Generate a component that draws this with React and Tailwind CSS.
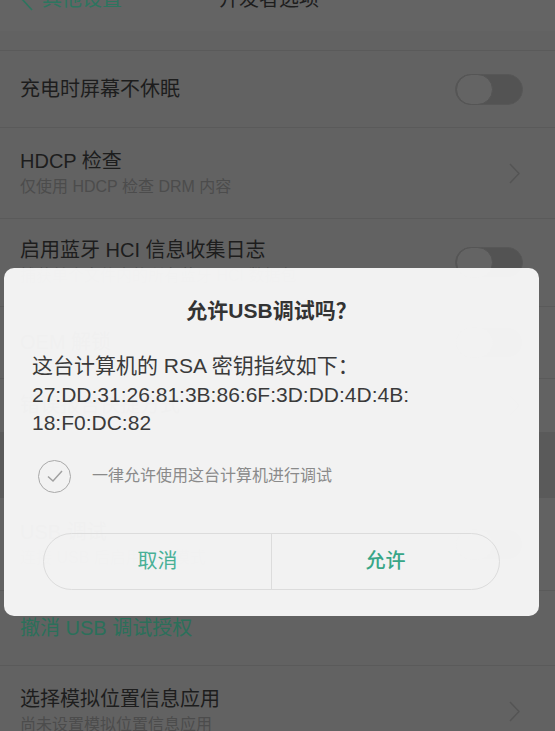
import React from "react";

const font = { fontFamily: '"Liberation Sans", "Noto Sans CJK SC", sans-serif' };

const Toggle = () => (
  <div className="relative w-[68px] h-[31px] rounded-full bg-[#535353] border border-[#575757] shrink-0">
    <div className="absolute left-0 top-[-1px] w-[37px] h-[31px] rounded-full bg-[#646464] border border-[#555555]" />
  </div>
);

const Chevron = () => (
  <svg width="13" height="23" viewBox="0 0 13 23" className="shrink-0 mr-[2px]">
    <polyline points="2,2 11,11.5 2,21" fill="none" stroke="#545454" strokeWidth="1.4" />
  </svg>
);

const Row = ({ title, sub, right, h, green, border = true }) => (
  <div className={"flex items-center justify-between pl-5 pr-[32px] " + h + (border ? " border-t border-[#5a5a5a]" : "")}>
    <div className="flex flex-col">
      <div className={"text-[20px] leading-[27px] " + (green ? "text-[#2b705a]" : "text-[#1d1d1d]")}>{title}</div>
      {sub && <div className="text-[16px] leading-[24px] text-[#4c4c4c]">{sub}</div>}
    </div>
    {right === "toggle" && <Toggle />}
    {right === "chevron" && <Chevron />}
  </div>
);

export default function App() {
  const [always, setAlways] = React.useState(true);
  return (
    <div style={font} className="relative w-full h-[731px] overflow-hidden bg-[#626262]">
      <div className="h-[31px] bg-[#646464] overflow-hidden">
        <div className="relative h-[20px] -mt-[11px] flex items-center">
          <div className="flex items-center pl-5 text-[#2d755f] text-[20px]">
            <svg width="14" height="24" viewBox="0 0 14 24" className="mr-2">
              <polyline points="12,1 2,12 12,23" fill="none" stroke="#2d755f" strokeWidth="1.6" />
            </svg>
            其他设置
          </div>
          <div className="absolute left-[219px] text-[20px] text-[#1d1d1d]">开发者选项</div>
        </div>
      </div>
      <div className="h-[19px]" />
      <Row h="h-[77px]" title="充电时屏幕不休眠" right="toggle" />
      <Row h="h-[91px]" title="HDCP 检查" sub="仅使用 HDCP 检查 DRM 内容" right="chevron" />
      <Row h="h-[88px]" title="启用蓝牙 HCI 信息收集日志" sub="捕获单个文件内的所有蓝牙 HCI 数据包" right="toggle" />
      <Row h="h-[72px]" title="OEM 解锁" right="toggle" />
      <Row h="h-[54px]" title="错误报告快捷方式" right="chevron" />
      <div className="h-[66px] bg-[#5a5a5a]" />
      <Row h="h-[92px]" title="USB 调试" sub="连接 USB 后启用调试模式" right="toggle" border={false} />
      <Row h="h-[75px]" title="撤消 USB 调试授权" green />
      <Row h="h-[91px]" title="选择模拟位置信息应用" sub="尚未设置模拟位置信息应用" right="chevron" />

      <div className="absolute left-[4px] top-[268px] w-[535px] h-[348px] rounded-[10px] bg-[#f7f7f7]/[0.97] flex flex-col">
        <div className="pt-[29px] text-center text-[21px] leading-[28px] font-semibold text-[#333333]">允许USB调试吗？</div>
        <div className="mt-[27px] pl-[28px] text-[21px] leading-[28.5px] text-[#3a3a3a]">
          <div>这台计算机的 RSA 密钥指纹如下：</div>
          <div>27:DD:31:26:81:3B:86:6F:3D:DD:4D:4B:</div>
          <div>18:F0:DC:82</div>
        </div>
        <button
          onClick={() => setAlways(!always)}
          className="mt-[22px] ml-[34px] flex items-center gap-[21px] text-left"
        >
          <span className="w-[33px] h-[33px] rounded-full border-[1.5px] border-[#a9a9a9] flex items-center justify-center">
            {always && (
              <svg width="18" height="14" viewBox="0 0 18 14">
                <polyline points="2,7.5 7,12 16,2" fill="none" stroke="#a0a0a0" strokeWidth="1.5" />
              </svg>
            )}
          </span>
          <span className="text-[16px] text-[#8a8a8a]">一律允许使用这台计算机进行调试</span>
        </button>
        <div className="mt-[40px] mx-[39px] h-[57px] rounded-full border border-[#dcdcdc] flex">
          <button className="flex-1 text-[20px] text-[#48b096]">取消</button>
          <div className="w-px bg-[#dcdcdc]" />
          <button className="flex-1 text-[20px] font-medium text-[#37a687]">允许</button>
        </div>
      </div>
    </div>
  );
}
